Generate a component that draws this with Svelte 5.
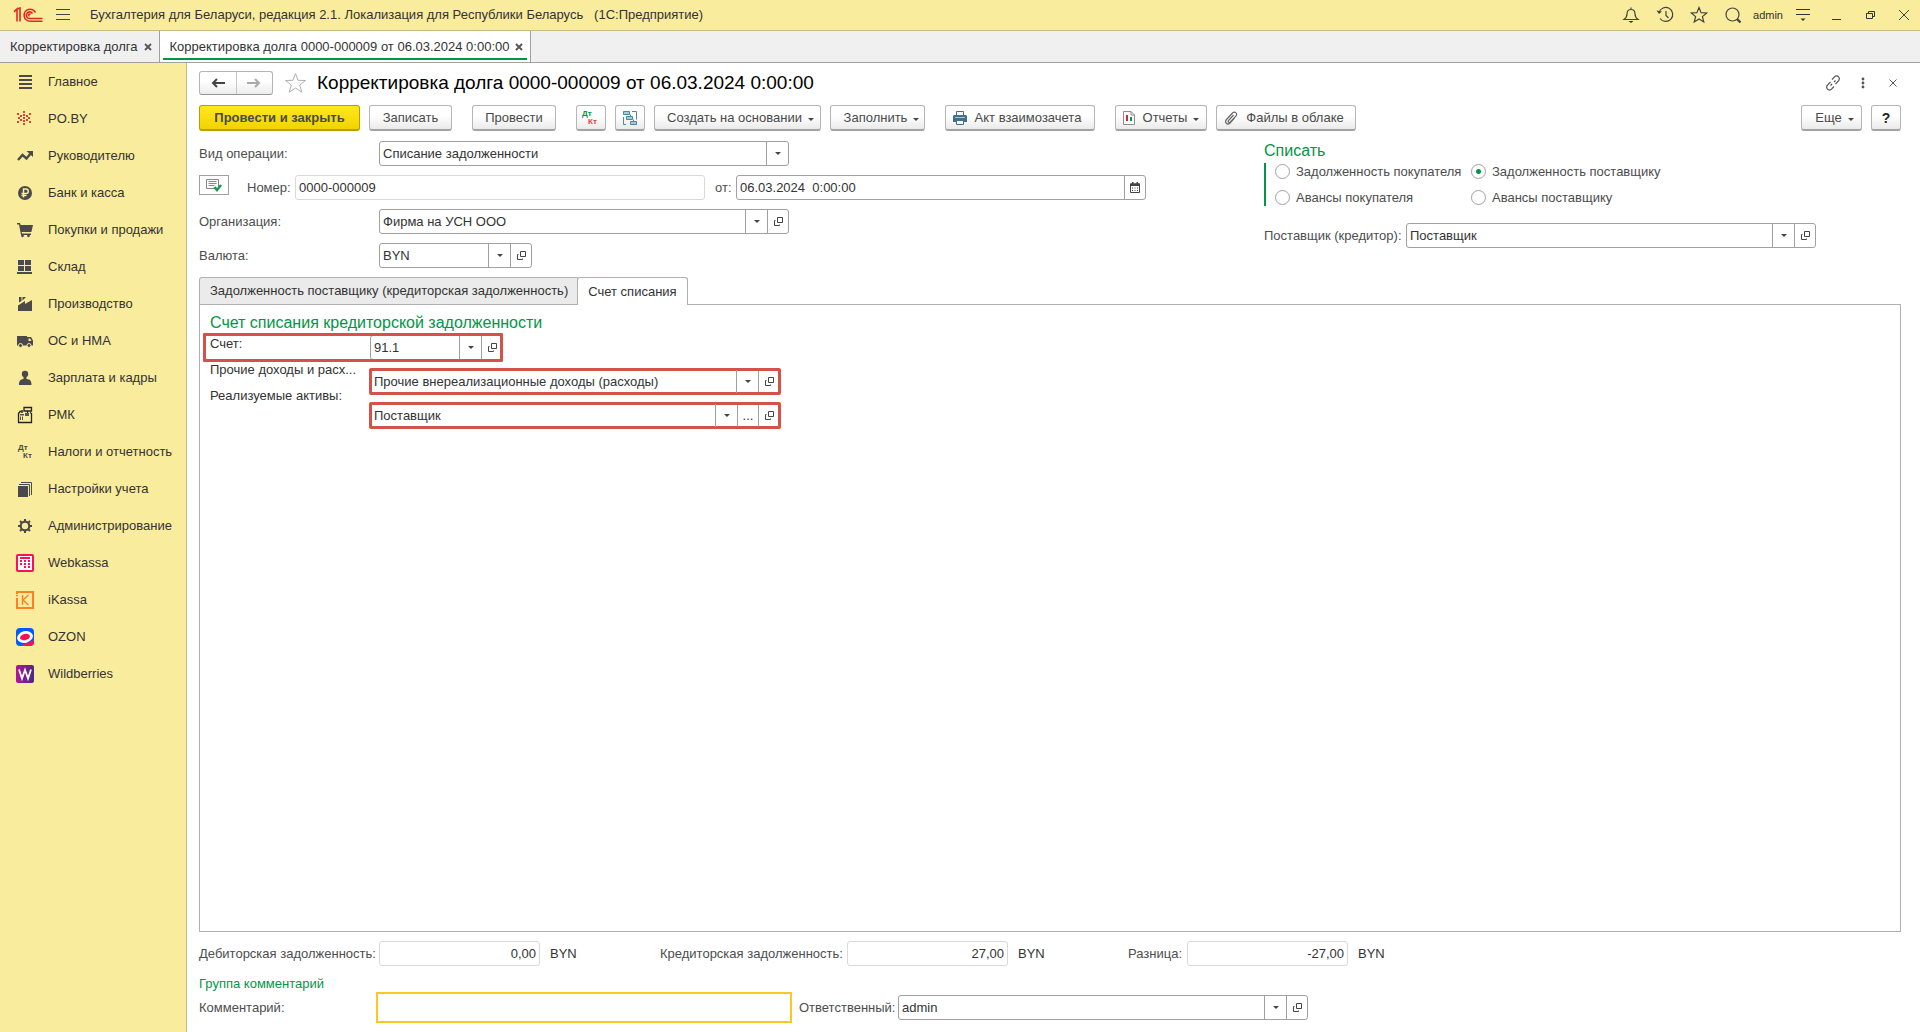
<script>
  const sections = [
    { icon: "main", title: "Главное" },
    { icon: "poby", title: "PO.BY" },
    { icon: "trend", title: "Руководителю" },
    { icon: "bank", title: "Банк и касса" },
    { icon: "cart", title: "Покупки и продажи" },
    { icon: "store", title: "Склад" },
    { icon: "factory", title: "Производство" },
    { icon: "truck", title: "ОС и НМА" },
    { icon: "person", title: "Зарплата и кадры" },
    { icon: "register", title: "РМК" },
    { icon: "dtkt", title: "Налоги и отчетность" },
    { icon: "books", title: "Настройки учета" },
    { icon: "gear", title: "Администрирование" },
    { icon: "webkassa", title: "Webkassa" },
    { icon: "ikassa", title: "iKassa" },
    { icon: "ozon", title: "OZON" },
    { icon: "wb", title: "Wildberries" },
  ];

  const targets = [
    "Задолженность покупателя",
    "Задолженность поставщику",
    "Авансы покупателя",
    "Авансы поставщику",
  ];

  const dots = [
    [7, 1], [7, 4], [7, 7], [7, 10], [7, 13], [4, 5], [4, 9], [10, 5], [10, 9],
    [1, 3], [1, 11], [13, 3], [13, 11], [2, 7], [12, 7],
  ];

  let target = $state("Задолженность поставщику");
  let number = $state("0000-000009");
  let date = $state("06.03.2024  0:00:00");
  let comment = $state("");
</script>

{#snippet sectionIcon(name)}
  <svg width="18" height="18" viewBox="0 0 18 18" fill="#4a4a4a" aria-hidden="true">
    {#if name === "main"}
      <path d="M3 2h13v2H3zM3 6h13v2H3zM3 10h13v2H3zM3 14h13v2H3z" />
    {:else if name === "poby"}
      {#each dots as [x, y]}
        <rect {x} {y} width="2" height="2" fill="#d9453a" />
      {/each}
    {:else if name === "trend"}
      <path d="M2 13l4.500-5 4 3.500L15 6" fill="none" stroke="#4a4a4a" stroke-width="2.400" />
      <path d="M10.500 4H17v6z" />
    {:else if name === "bank"}
      <circle cx="9" cy="9" r="7" />
      <path d="M7.500 13.500V5H10a2.300 2.300 0 010 4.600H5.500M5.500 11.600h5" fill="none" stroke="#faec9d" stroke-width="1.500" />
    {:else if name === "cart"}
      <path d="M1 2h3l.6 2H17l-1.600 7H5.600l.4 1.500h9V14H5L3 3.500H1z" />
      <circle cx="6.500" cy="14.800" r="1.400" /><circle cx="12.500" cy="14.800" r="1.400" />
    {:else if name === "store"}
      <path d="M2 2h6v5H2zM9 2h6v5H9zM2 8h6v5H2zM9 8h6v5H9zM1 14h15v2H1z" />
    {:else if name === "factory"}
      <path d="M2 16V10.500L9 6v3l7-4v11zM3 2h2.500v4L3 7.500zM6.500 2H10L6.500 5.500z" />
    {:else if name === "truck"}
      <path d="M1 4h10v9.500H1zM11 5h4l2 3.500v5h-6z" />
      <path d="M12.500 6.500H14L15.500 9h-3z" fill="#faec9d" />
      <circle cx="4.500" cy="13.500" r="2" stroke="#faec9d" /><circle cx="13" cy="13.500" r="2" stroke="#faec9d" />
    {:else if name === "person"}
      <circle cx="9" cy="5" r="3.200" /><path d="M7.500 8h3v2c4 .5 5 2 5 6H3c0-4 1-5.500 4.500-6z" />
    {:else if name === "register"}
      <path d="M8 1.500h7.500v3.500H8zM11.500 5v2M7 5.500H4l-1.500 2v9h13V7.500l-1.500-1" fill="none" stroke="#222" stroke-width="1.300" />
      <path d="M5 4h2v3H5zM4 8h4v1.500H4zM4 10.500h1V14H4zM6 10.500h1V14H6zM9 7h4v3H9z" fill="#555" />
    {:else if name === "dtkt"}
      <text x="2" y="7" class="glyph">Дт</text><text x="7" y="15" class="glyph">Кт</text>
    {:else if name === "books"}
      <path d="M2 6h10v11H2z" />
      <path d="M3 4.500h10.500V16M5 2.500h10.500V15" fill="none" stroke="#4a4a4a" />
    {:else if name === "gear"}
      <circle cx="9" cy="9" r="4.300" fill="none" stroke="#4a4a4a" stroke-width="2.200" />
      <path d="M9 2v2.500M9 13.500V16M2 9h2.500M13.500 9H16M4 4l1.800 1.800M12.200 12.200L14 14M14 4l-1.800 1.800M5.800 12.200L4 14" stroke="#4a4a4a" stroke-width="2" />
    {:else if name === "webkassa"}
      <rect x="1" y="1" width="16" height="16" rx="1" fill="#fff" stroke="#ff0f55" stroke-width="2" />
      <path d="M4 3h10v2H4zM4 6h2v2H4zM8 6h2v2H8zM12 6h2v2h-2zM4 9h2v2H4zM8 9h2v2H8zM12 9h2v2h-2zM8 12h2v2H8zM12 12h2v2h-2z" fill="#ff0f55" />
    {:else if name === "ikassa"}
      <path d="M1 3V1h16v16H1V7" fill="none" stroke="#ff7f27" stroke-width="2" />
      <path d="M0 4.500h2M6.500 4v10M12.500 4L7 9l5.500 5" fill="none" stroke="#ff7f27" stroke-width="1.400" />
    {:else if name === "ozon"}
      <rect width="18" height="18" rx="4" fill="#005bff" />
      <path d="M4 18L18 12v2a4 4 0 01-4 4z" fill="#f91155" />
      <ellipse cx="9" cy="9" rx="8" ry="5.800" fill="#fff" transform="rotate(-14 9 9)" />
      <ellipse cx="9" cy="9" rx="5" ry="3.100" fill="#f91155" transform="rotate(-14 9 9)" />
    {:else if name === "wb"}
      <defs>
        <linearGradient id="wb-fill"><stop offset="0" stop-color="#b0149c" /><stop offset="1" stop-color="#4a2a84" /></linearGradient>
      </defs>
      <rect width="18" height="18" rx="2" fill="url(#wb-fill)" />
      <path d="M3 4.500l3 9L9 5l3 8.500 3-9" fill="none" stroke="#fff" stroke-width="1.800" />
    {/if}
  </svg>
{/snippet}

{#snippet openIcon()}
  <svg width="11" height="11" viewBox="0 0 11 11" fill="none" stroke="#444" aria-hidden="true">
    <path d="M4.500 1.500h5v5h-5zM2.500 4.500h-1v5h5v-1" />
  </svg>
{/snippet}

{#snippet picker(id, value, size, open = true, more = false)}
  <div class="field {size}">
    <div class="pick">
      <select {id}>
        <option>{value}</option>
      </select>
      <span class="arrow"></span>
    </div>
    {#if more}
      <button class="cell" aria-label="Выбрать">...</button>
    {/if}
    {#if open}
      <button class="cell" aria-label="Открыть">{@render openIcon()}</button>
    {/if}
  </div>
{/snippet}

<div class="app">
  <header class="topbar">
    <svg class="logo" width="30" height="16" viewBox="0 0 30 16" fill="none" stroke="#e0281e" stroke-width="1.600" aria-label="1C">
      <path d="M1 4.500l3-2.500v12.500M1 4.500h1.500M7 14.500V1L4 2" />
      <path d="M22.500 5.500A6 6 0 1017 14.200h12.500" />
      <path d="M19.500 6.500a3.300 3.300 0 10-3 5H29.500" />
      <path d="M17.500 7.500a1 1 0 10-1 1.500" />
    </svg>
    <button class="burger" aria-label="Меню">
      <svg width="14" height="12" viewBox="0 0 14 12" stroke="#444"><path d="M0 .5h14M0 5.500h14M0 10.500h14" /></svg>
    </button>
    <span class="app-title">Бухгалтерия для Беларуси, редакция 2.1. Локализация для Республики Беларусь &nbsp; (1С:Предприятие)</span>
    <button class="tool" aria-label="Оповещения">
      <svg width="18" height="18" viewBox="0 0 18 18" fill="none" stroke="#444" stroke-width="1.200">
        <path d="M2 13.500c2-1.500 3-3 3-5.500 0-3 1.500-4.500 4-4.500S13 5 13 8c0 2.500 1 4 3 5.500zM9 1.500v2" />
        <path d="M6.500 15h5L9 17z" fill="#333" stroke="none" />
      </svg>
    </button>
    <button class="tool" aria-label="История">
      <svg width="18" height="18" viewBox="0 0 18 18" fill="none" stroke="#444" stroke-width="1.200">
        <path d="M3 6.500a7 7 0 111 6M10 5v4.500l2.500 2.500" /><path d="M.5 4.500L3 8l3-2.500z" fill="#444" stroke="none" />
      </svg>
    </button>
    <button class="tool" aria-label="Избранное">
      <svg width="18" height="18" viewBox="0 0 18 18" fill="none" stroke="#444" stroke-width="1.200">
        <path d="M9 1.500l2.100 5.200 5.600.3-4.300 3.600 1.400 5.400L9 13l-4.800 3 1.400-5.400L1.300 7l5.600-.3z" />
      </svg>
    </button>
    <button class="tool" aria-label="Поиск">
      <svg width="18" height="18" viewBox="0 0 18 18" fill="none" stroke="#444" stroke-width="1.200">
        <circle cx="8.500" cy="8.500" r="6.500" /><path d="M13 13l3.500 3.500" stroke-width="2.400" />
      </svg>
    </button>
    <span class="user">admin</span>
    <button class="tool" aria-label="Сервис">
      <svg width="16" height="14" viewBox="0 0 16 14" stroke="#333"><path d="M1 1.500h14M1 6.500h14" /><path d="M5.500 10.500h5L8 13z" fill="#333" stroke="none" /></svg>
    </button>
    <button class="tool" aria-label="Свернуть">
      <svg width="10" height="14" viewBox="0 0 10 14" stroke="#333"><path d="M0 11.500h9" /></svg>
    </button>
    <button class="tool" aria-label="Развернуть">
      <svg width="10" height="10" viewBox="0 0 10 10" fill="none" stroke="#333"><path d="M.5 3.500h6v5h-6zM2.500 3.500v-2h6v5h-2" /></svg>
    </button>
    <button class="tool last" aria-label="Закрыть">
      <svg width="12" height="12" viewBox="0 0 12 12" stroke="#444"><path d="M1 1l10 10M11 1L1 11" /></svg>
    </button>
  </header>

  <nav class="window-tabs">
    <div class="window-tab">
      <a href="#list">Корректировка долга</a>
      <button aria-label="Закрыть вкладку"><svg width="8" height="8" viewBox="0 0 8 8" stroke="#555" stroke-width="1.800"><path d="M1 1l6 6M7 1L1 7" /></svg></button>
    </div>
    <div class="window-tab current">
      <a href="#doc">Корректировка долга 0000-000009 от 06.03.2024 0:00:00</a>
      <button aria-label="Закрыть вкладку"><svg width="8" height="8" viewBox="0 0 8 8" stroke="#555" stroke-width="1.800"><path d="M1 1l6 6M7 1L1 7" /></svg></button>
    </div>
  </nav>

  <div class="body">
    <aside class="sidebar">
      {#each sections as section}
        <a href="#{section.icon}">
          {@render sectionIcon(section.icon)}
          <span>{section.title}</span>
        </a>
      {/each}
    </aside>

    <main>
      <div class="title-row">
        <div class="history">
          <button aria-label="Назад"><svg width="14" height="10" viewBox="0 0 14 10" fill="none" stroke="#444" stroke-width="2"><path d="M14 5H2M6 1L2 5l4 4" /></svg></button>
          <button aria-label="Вперед"><svg width="14" height="10" viewBox="0 0 14 10" fill="none" stroke="#aaa" stroke-width="2"><path d="M0 5h12M8 1l4 4-4 4" /></svg></button>
        </div>
        <button class="fav" aria-label="В избранное">
          <svg width="23" height="22" viewBox="0 0 23 22" fill="none" stroke="#b0b0b0"><path d="M11.500 1.500l2.600 6.800 7.400.2-5.800 4.600 2.100 7.100-6.300-4.200-6.300 4.200 2.100-7.100L1.500 8.500l7.400-.2z" /></svg>
        </button>
        <h1>Корректировка долга 0000-000009 от 06.03.2024 0:00:00</h1>
        <button class="form-tool" aria-label="Ссылка">
          <svg width="16" height="16" viewBox="0 0 16 16" fill="none" stroke="#555" stroke-width="1.200"><path d="M7 4.500l2.500-2.700a2.800 2.800 0 014 0 2.800 2.800 0 010 4L10.500 9M9 11.500l-2.500 2.700a2.800 2.800 0 01-4 0 2.800 2.800 0 010-4L5.500 7M5.500 10.500l1.500-1.500M9 7l1.500-1.500" /></svg>
        </button>
        <button class="form-tool" aria-label="Еще действия">
          <svg width="4" height="12" viewBox="0 0 4 12" fill="#555"><circle cx="2" cy="2" r="1.400" /><circle cx="2" cy="6" r="1.400" /><circle cx="2" cy="10" r="1.400" /></svg>
        </button>
        <button class="form-tool" aria-label="Закрыть форму">
          <svg width="8" height="8" viewBox="0 0 8 8" stroke="#555"><path d="M.5.5l7 7M7.500.5l-7 7" /></svg>
        </button>
      </div>

      <div class="commands">
        <button class="btn primary">Провести и закрыть</button>
        <button class="btn write">Записать</button>
        <button class="btn post">Провести</button>
        <button class="btn square start" aria-label="Показать проводки">
          <svg width="18" height="18" viewBox="0 0 18 18"><text x="0" y="7" class="glyph" fill="#009646">Дт</text><text x="6" y="15" class="glyph" fill="#d9453a">Кт</text></svg>
        </button>
        <button class="btn square" aria-label="Структура подчиненности">
          <svg width="16" height="16" viewBox="0 0 16 16" fill="#a9c9d9" stroke="#4f87a3"><path d="M1.500 1.500h6v3h-6zM4.500 6.500h6v3h-6zM8.500 11.500h6v3h-6z" /><path d="M10 1.500h4.500v8M4 14.500H1.500V7M8.500 4.500V6M11.500 9.500V11" fill="none" /></svg>
        </button>
        <button class="btn base">Создать на основании <i class="caret"></i></button>
        <button class="btn fill">Заполнить <i class="caret"></i></button>
        <button class="btn act start">
          <svg width="14" height="14" viewBox="0 0 14 14"><path d="M3.500.5h7V5h-7z" fill="#fff" stroke="#3f6f8c" /><path d="M1 4h12l1 1v6H0V5z" fill="#3f6f8c" /><path d="M2 6h10v1H2z" fill="#a9c9d9" /><path d="M3.500 9.500h7v4h-7z" fill="#fff" stroke="#3f6f8c" /></svg>
          Акт взаимозачета
        </button>
        <button class="btn reports start">
          <svg width="12" height="14" viewBox="0 0 12 14"><path d="M.5.5H8L11.500 4v9.500H.5z" fill="#fff" stroke="#8d8d8d" /><path d="M8 .5V4h3.500" fill="none" stroke="#8d8d8d" /><path d="M3 4h2v6H3z" fill="#d9253a" /><path d="M7 6h2v4H7z" fill="#009646" /></svg>
          Отчеты <i class="caret"></i>
        </button>
        <button class="btn files">
          <svg width="14" height="14" viewBox="0 0 14 14" fill="none" stroke="#666" stroke-width="1.200"><path d="M9.500 4l-5 5.500c-1 1.500 1 2.700 2 1.500L12 5c2-3-1.500-5-3.500-3L2.500 8.500c-2.500 3 1 6 3.500 3.500l4.500-5" /></svg>
          Файлы в облаке
        </button>
        <button class="btn more">Еще <i class="caret"></i></button>
        <button class="btn square help">?</button>
      </div>

      <div class="form">
        <div class="requisites">
          <div class="row">
            <label for="operation">Вид операции:</label>
            {@render picker("operation", "Списание задолженности", "wide", false)}
          </div>
          <div class="row">
            <button class="status" aria-label="Документ проведен">
              <svg width="16" height="14" viewBox="0 0 16 14" fill="none" stroke="#888"><path d="M.5 1.500h12v9H.5zM2.500 3.500h8M2.500 5.500h8M2.500 7.500h6" /><path d="M8.500 9l2.500 3 4-5" stroke="#1a9a50" stroke-width="2.400" /></svg>
            </button>
            <label class="number-label" for="number">Номер:</label>
            <div class="field wide readonly"><input id="number" bind:value={number} /></div>
            <label class="date-label" for="date">от:</label>
            <div class="field wide">
              <input id="date" bind:value={date} />
              <button class="cell" aria-label="Календарь">
                <svg width="10" height="11" viewBox="0 0 10 11"><path d="M.5 2h9v8.500h-9z" fill="#fff" stroke="#444" /><path d="M0 1.500h10V4H0zM2 0h1.500v2H2zM6.500 0H8v2H6.500zM2 5.500h1v1H2zM4.500 5.500h1v1h-1zM7 5.500h1v1H7zM2 8h1v1H2zM4.500 8h1v1h-1zM7 8h1v1H7z" fill="#444" /></svg>
              </button>
            </div>
          </div>
          <div class="row">
            <label for="company">Организация:</label>
            {@render picker("company", "Фирма на УСН ООО", "wide")}
          </div>
          <div class="row">
            <label for="currency">Валюта:</label>
            {@render picker("currency", "BYN", "currency")}
          </div>
        </div>

        <div class="write-off">
          <h2>Списать</h2>
          <div class="radios" role="radiogroup" aria-label="Списать">
            {#each targets as item}
              <label><input type="radio" name="target" value={item} bind:group={target} />{item}</label>
            {/each}
          </div>
          <div class="row">
            <label class="creditor-label" for="creditor">Поставщик (кредитор):</label>
            {@render picker("creditor", "Поставщик", "wide")}
          </div>
        </div>
      </div>

      <div class="tabs" role="tablist">
        <button role="tab" aria-selected="false">Задолженность поставщику (кредиторская задолженность)</button>
        <button role="tab" aria-selected="true" class="active">Счет списания</button>
      </div>
      <section class="panel">
        <h2>Счет списания кредиторской задолженности</h2>
        <div class="account">
          <div class="account-labels">
            <label for="account">Счет:</label>
            <label for="income">Прочие доходы и расх...</label>
            <label for="assets">Реализуемые активы:</label>
          </div>
          <div class="account-fields">
            {@render picker("account", "91.1", "code")}
            <div class="marked">{@render picker("income", "Прочие внереализационные доходы (расходы)", "wide")}</div>
            <div class="marked">{@render picker("assets", "Поставщик", "wide", true, true)}</div>
          </div>
          <div class="mark"></div>
        </div>
      </section>

      <div class="totals">
        <label for="debit">Дебиторская задолженность:</label>
        <div class="field sum readonly"><input id="debit" value="0,00" readonly /></div>
        <span class="unit">BYN</span>
        <label class="credit-label" for="credit">Кредиторская задолженность:</label>
        <div class="field sum readonly"><input id="credit" value="27,00" readonly /></div>
        <span class="unit">BYN</span>
        <label class="diff-label" for="diff">Разница:</label>
        <div class="field sum readonly"><input id="diff" value="-27,00" readonly /></div>
        <span class="unit">BYN</span>
      </div>

      <h3>Группа комментарий</h3>
      <div class="comment-row">
        <label class="comment-label" for="comment">Комментарий:</label>
        <input id="comment" class="comment" bind:value={comment} />
        <label class="owner-label" for="owner">Ответственный:</label>
        {@render picker("owner", "admin", "wide")}
      </div>
    </main>
  </div>
</div>

<style>
  :global(body) {
    margin: 0;
    background: #fff;
  }

  .app {
    display: flex;
    flex-direction: column;
    min-height: 100vh;
    font-family: "Liberation Sans", Arial, sans-serif;
    font-size: 13px;
    line-height: 16px;
    color: #333;
  }

  * {
    box-sizing: border-box;
  }

  svg {
    flex: none;
    display: block;
  }

  button,
  input,
  select {
    margin: 0;
    font: inherit;
    color: inherit;
  }

  button {
    display: flex;
    align-items: center;
    justify-content: center;
    padding: 0;
    border: 0;
    background: none;
    white-space: nowrap;
  }

  a {
    color: inherit;
    text-decoration: none;
  }

  h1,
  h2,
  h3 {
    margin: 0;
    font-weight: 400;
  }

  h2 {
    font-size: 16px;
    line-height: 20px;
    color: #009646;
  }

  .glyph {
    font-size: 8px;
    font-weight: 700;
  }

  .topbar {
    display: flex;
    align-items: center;
    height: 31px;
    padding-left: 13px;
    background: #faec9d;
    border-bottom: 1px solid #c9bd7e;
  }

  .burger {
    width: 14px;
    margin: 0 20px 0 13px;
  }

  .app-title {
    flex: 1;
    white-space: nowrap;
  }

  .tool {
    width: 34px;
    height: 30px;
  }

  .last {
    width: 32px;
  }

  .user {
    width: 36px;
    text-align: center;
    font-size: 11px;
  }

  .window-tabs {
    display: flex;
    height: 32px;
    background: #f0f0f0;
    border-bottom: 1px solid #a0a0a0;
  }

  .window-tab {
    display: flex;
    align-items: center;
    gap: 6px;
    padding: 0 7px 0 10px;
    border-right: 1px solid #a0a0a0;
    white-space: nowrap;
  }

  .current {
    position: relative;
    background: #fff;
  }

  .current::after {
    content: "";
    position: absolute;
    right: 3px;
    bottom: 2px;
    left: 3px;
    height: 2px;
    background: #009646;
  }

  .body {
    flex: 1;
    display: flex;
  }

  .sidebar {
    flex: none;
    width: 187px;
    background: #faec9d;
    border-right: 1px solid #c9bd7e;
  }

  .sidebar a {
    display: flex;
    align-items: center;
    gap: 14px;
    height: 37px;
    padding-left: 16px;
    white-space: nowrap;
  }

  main {
    flex: 1;
    display: flex;
    flex-direction: column;
    min-width: 0;
    padding: 8px 19px 9px 12px;
  }

  label {
    color: #4d4d4d;
    white-space: nowrap;
  }

  .title-row {
    display: flex;
    align-items: center;
    height: 24px;
    margin-right: -7px;
  }

  .history {
    display: flex;
    width: 74px;
    height: 24px;
    border: 1px solid #b5b5b5;
    border-bottom-color: #949494;
    border-radius: 3px;
    background: linear-gradient(#fff 40%, #ececec);
  }

  .history button {
    flex: 1;
  }

  .history button + button {
    border-left: 1px solid #c8c8c8;
  }

  .fav {
    margin: 0 10px 0 11px;
  }

  h1 {
    flex: 1;
    font-size: 19px;
    line-height: 24px;
    color: #000;
    white-space: nowrap;
  }

  .form-tool {
    width: 30px;
    height: 24px;
  }

  .commands {
    display: flex;
    gap: 9px;
    margin-top: 10px;
  }

  .btn {
    height: 26px;
    padding-top: 1px;
    border: 1px solid #b5b5b5;
    border-bottom: 2px solid #a3a3a3;
    border-radius: 3px;
    background: linear-gradient(#fff 40%, #ebebeb);
    color: #4a4a4a;
  }

  .primary {
    width: 161px;
    border-color: #b79f00;
    background: linear-gradient(#ffe81f, #f2d300);
    font-weight: 700;
  }

  .write {
    width: 83px;
  }

  .post {
    width: 84px;
    margin-left: 11px;
  }

  .square {
    width: 30px;
  }

  .start {
    margin-left: 11px;
  }

  .base {
    width: 167px;
    padding-left: 6px;
  }

  .fill {
    width: 95px;
    padding-left: 8px;
  }

  .act {
    width: 150px;
    gap: 8px;
    padding-right: 6px;
  }

  .reports {
    width: 92px;
    gap: 8px;
  }

  .reports .caret {
    margin-left: -2px;
  }

  .files {
    width: 140px;
    gap: 8px;
    padding-right: 4px;
  }

  .more {
    width: 61px;
    margin-left: auto;
    padding-left: 6px;
  }

  .help {
    font-size: 14px;
    font-weight: 700;
    color: #222;
  }

  .caret,
  .arrow::after {
    width: 0;
    height: 0;
    border: 3px solid transparent;
    border-top-color: #444;
    border-bottom: 0;
  }

  .caret {
    margin: 2px 0 0 6px;
  }

  .form {
    display: flex;
    align-items: flex-start;
    gap: 118px;
    margin-top: 10px;
  }

  .requisites {
    display: flex;
    flex-direction: column;
    gap: 9px;
  }

  .row,
  .totals,
  .comment-row {
    display: flex;
    align-items: center;
  }

  .requisites label,
  .totals label {
    width: 180px;
  }

  .requisites .number-label {
    width: 48px;
  }

  .requisites .date-label {
    width: 31px;
    padding-left: 10px;
  }

  .status {
    align-self: flex-start;
    width: 30px;
    height: 20px;
    margin-right: 18px;
    border: 1px solid #a0a0a0;
  }

  .field {
    display: flex;
    height: 25px;
    border: 1px solid #a0a0a0;
    border-radius: 3px;
    background: #fff;
  }

  .wide {
    width: 410px;
  }

  .currency {
    width: 153px;
  }

  .code {
    width: 133px;
  }

  .sum {
    width: 161px;
  }

  .readonly {
    border-color: #d9d9d9;
  }

  .field input,
  .field select {
    flex: 1;
    width: 100%;
    min-width: 0;
    padding: 0 3px;
    border: 0;
    outline: 0;
    background: none;
    appearance: none;
    white-space: pre;
  }

  .sum input {
    text-align: right;
  }

  .pick {
    position: relative;
    flex: 1;
    display: flex;
  }

  .arrow {
    position: absolute;
    top: 0;
    right: 0;
    bottom: 0;
    display: flex;
    align-items: center;
    justify-content: center;
    width: 22px;
    border-left: 1px solid #a0a0a0;
    pointer-events: none;
  }

  .arrow::after {
    content: "";
  }

  .cell {
    width: 21px;
    border-left: 1px solid #a0a0a0;
  }

  .radios {
    display: grid;
    grid-template-columns: 196px auto;
    align-content: space-between;
    justify-content: start;
    height: 43px;
    margin: 2px 0 17px;
    padding-left: 9px;
    border-left: 2px solid #009646;
  }

  .radios label {
    display: flex;
    align-items: center;
    gap: 6px;
    height: 17px;
  }

  .radios input {
    width: 15px;
    height: 15px;
    margin: 0;
    border: 1px solid #a0a0a0;
    border-radius: 50%;
    appearance: none;
  }

  .radios input:checked {
    background: radial-gradient(#009646 0 2px, transparent 3px);
  }

  .creditor-label {
    width: 142px;
  }

  .tabs {
    display: flex;
    margin-top: 9px;
  }

  .tabs button {
    height: 27px;
    padding: 0 10px;
    border: 1px solid #b0b0b0;
    border-bottom: 0;
    border-radius: 3px 3px 0 0;
    background: #ebebeb;
  }

  .tabs .active {
    position: relative;
    height: 28px;
    margin: 0 0 -1px -2px;
    background: #fff;
  }

  .panel {
    flex: 1;
    padding: 8px 10px;
    border: 1px solid #b0b0b0;
  }

  .account {
    position: relative;
    display: flex;
    width: max-content;
  }

  .account-labels {
    display: flex;
    flex-direction: column;
    width: 160px;
  }

  .account-labels label {
    color: #333;
    line-height: 26px;
  }

  .account-fields {
    display: flex;
    flex-direction: column;
    gap: 9px;
    padding-top: 2px;
  }

  .marked {
    border-radius: 1px;
    outline: 3px solid #d4524a;
    outline-offset: -2px;
  }

  /* frame round the whole account line, label included */
  .mark {
    position: absolute;
    top: 0;
    left: -7px;
    width: 300px;
    height: 29px;
    border: 3px solid #d4524a;
    border-radius: 1px;
    pointer-events: none;
  }

  .account-labels {
    margin-top: -2px;
  }

  .totals {
    margin-top: 9px;
  }

  .totals .credit-label {
    width: 187px;
  }

  .totals .diff-label {
    width: 59px;
  }

  .unit {
    width: 120px;
    padding-left: 10px;
  }

  h3 {
    margin-top: 10px;
    font-size: 13px;
    line-height: 16px;
    color: #009646;
  }

  .comment-label {
    width: 177px;
  }

  .comment {
    width: 416px;
    height: 31px;
    padding: 0 6px;
    border: 2px solid #f9c922;
    outline: 0;
  }

  .owner-label {
    width: 106px;
    padding-left: 7px;
  }
</style>
